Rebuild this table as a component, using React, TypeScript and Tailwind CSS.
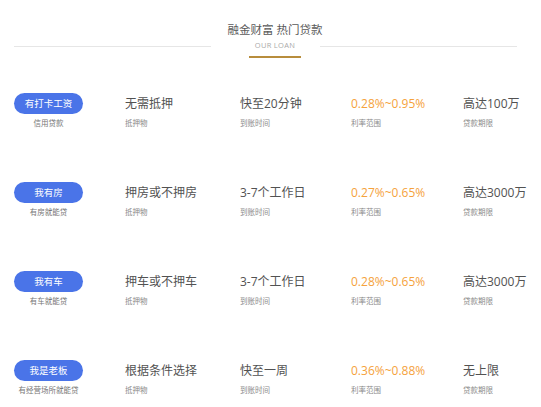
const loans = [
  {
    tag: '有打卡工资',
    desc: '信用贷款',
    collateral: '无需抵押',
    arrival: '快至20分钟',
    rate: '0.28%~0.95%',
    amount: '高达100万',
  },
  {
    tag: '我有房',
    desc: '有房就能贷',
    collateral: '押房或不押房',
    arrival: '3-7个工作日',
    rate: '0.27%~0.65%',
    amount: '高达3000万',
  },
  {
    tag: '我有车',
    desc: '有车就能贷',
    collateral: '押车或不押车',
    arrival: '3-7个工作日',
    rate: '0.28%~0.65%',
    amount: '高达3000万',
  },
  {
    tag: '我是老板',
    desc: '有经营场所就能贷',
    collateral: '根据条件选择',
    arrival: '快至一周',
    rate: '0.36%~0.88%',
    amount: '无上限',
  },
];

function Cell({ value, label, orange }: { value: string; label: string; orange?: boolean }) {
  return (
    <div className="flex flex-col">
      <div
        className={
          'flex h-[21px] items-center text-[12px] leading-none ' +
          (orange ? 'text-[#f5a23c]' : 'text-[#525252]')
        }
      >
        {value}
      </div>
      <div className="mt-[4px] text-[7.5px] leading-[10px] text-[#8a8a8a]">{label}</div>
    </div>
  );
}

export default function App() {
  return (
    <div className="h-[407px] w-[541px] overflow-hidden bg-white font-['Open_Sans','Noto_Sans_CJK_SC',sans-serif]">
      {/* Header */}
      <div className="pt-[22px]">
        <div className="pl-[9px] text-center text-[11.5px] leading-[16px] text-[#5a5a5a]">
          融金财富 热门贷款
        </div>
        <div className="mt-[1px] flex h-[14px] items-center pl-[14px]">
          <div className="h-px w-[197px] bg-[#e6e6e6]" />
          <div className="w-[109px] pl-[19px] text-center text-[7.5px] leading-none tracking-[0.3px] text-[#aaaaaa]">
            OUR LOAN
          </div>
          <div className="h-px w-[197px] bg-[#e6e6e6]" />
        </div>
        <div className="ml-[249px] mt-[3px] h-[2px] w-[52px] bg-[#b88d3c]" />
      </div>

      {/* Loan rows */}
      <div className="mt-[35px] flex flex-col gap-[54px] pl-[14px]">
        {loans.map((loan) => (
          <div key={loan.tag} className="grid grid-cols-[111px_115px_111px_112px_1fr]">
            <div className="flex w-[69px] flex-col items-center">
              <div className="flex h-[21px] w-[69px] items-center justify-center rounded-full bg-[#4a74e8] text-[9.5px] leading-none text-white">
                {loan.tag}
              </div>
              <div className="mt-[4px] whitespace-nowrap text-[7.5px] leading-[10px] text-[#777777]">
                {loan.desc}
              </div>
            </div>
            <Cell value={loan.collateral} label="抵押物" />
            <Cell value={loan.arrival} label="到账时间" />
            <Cell value={loan.rate} label="利率范围" orange />
            <Cell value={loan.amount} label="贷款期限" />
          </div>
        ))}
      </div>
    </div>
  );
}
